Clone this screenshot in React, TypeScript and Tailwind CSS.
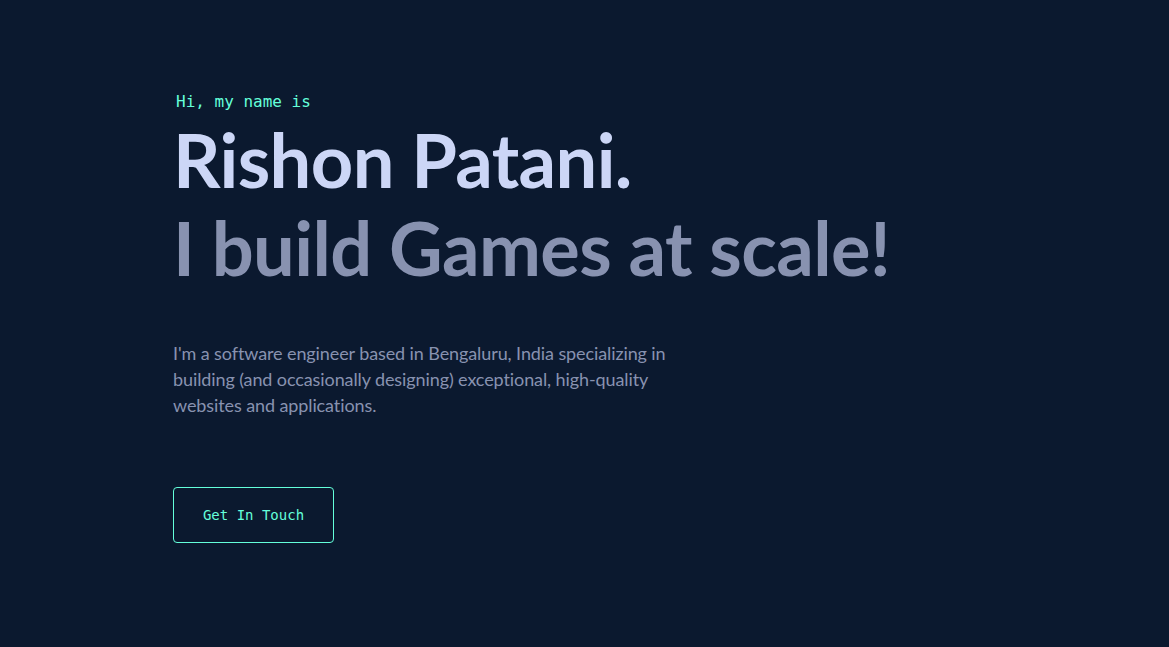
export default function App() {
  return (
    <main className="min-h-[647px] w-full bg-[#0b192f]">
      <section className="flex flex-col items-start pl-[173px] pt-[90px]">
        <h1 className="ml-[3px] font-['DejaVu_Sans_Mono',monospace] text-[16px] leading-[24px] text-[#64ffda]">
          Hi, my name is
        </h1>
        <h2 className="mt-[2px] font-['Lato',sans-serif] text-[74px] font-bold leading-[88px] tracking-[-0.6px] text-[#ccd6f6]">
          Rishon Patani.
        </h2>
        <h3 className="font-['Lato',sans-serif] text-[74px] font-bold leading-[88px] tracking-[-0.6px] text-[#8892b0]">
          I build Games at scale!
        </h3>
        <p className="mt-[48px] max-w-[500px] font-['Lato',sans-serif] text-[18px] leading-[26px] tracking-[-0.1px] text-[#8892b0]">
          I'm a software engineer based in Bengaluru, India specializing in building (and
          occasionally designing) exceptional, high-quality websites and applications.
        </p>
        <a
          href="#contact"
          className="mt-[69px] flex h-[56px] w-[161px] items-center justify-center rounded-[4px] border border-[#64ffda] font-['DejaVu_Sans_Mono',monospace] text-[14px] text-[#64ffda]"
        >
          Get In Touch
        </a>
      </section>
    </main>
  );
}
